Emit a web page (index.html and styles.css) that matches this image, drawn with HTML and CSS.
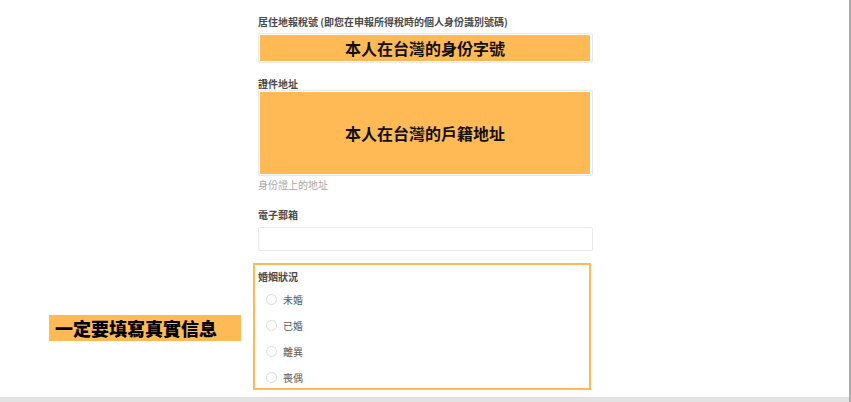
FILE: index.html
```html
<!DOCTYPE html>
<html lang="zh-Hant">
<head>
<meta charset="utf-8">
<title>表單</title>
<link rel="stylesheet" href="styles.css">
</head>
<body>
<div class="page">
  <div class="main">
    <form class="form">
      <div class="label label-first">居住地報稅號 (即您在申報所得稅時的個人身份識別號碼)</div>
      <div class="input input-id"><div class="fill">本人在台灣的身份字號</div></div>
      <div class="label label-addr">證件地址</div>
      <div class="input input-addr"><div class="fill">本人在台灣的戶籍地址</div></div>
      <div class="hint">身份證上的地址</div>
      <div class="label label-mail">電子郵箱</div>
      <div class="input input-mail"></div>
      <div class="group">
        <div class="group-label">婚姻狀況</div>
        <div class="radio"><span class="dot"></span><span class="opt">未婚</span></div>
        <div class="radio"><span class="dot"></span><span class="opt">已婚</span></div>
        <div class="radio"><span class="dot"></span><span class="opt">離異</span></div>
        <div class="radio"><span class="dot"></span><span class="opt">喪偶</span></div>
      </div>
    </form>
    <div class="callout">一定要填寫真實信息</div>
  </div>
  <div class="bottom"></div>
</div>
</body>
</html>
```
FILE: styles.css
```css
html, body {
  margin: 0;
  padding: 0;
  background: #ffffff;
}
body {
  font-family: "Noto Sans CJK TC", "Noto Sans", sans-serif;
  color: #444;
}
.page {
  width: 849px;
  height: 402px;
  border-right: 2px solid #ababab;
  display: flex;
  flex-direction: column;
  overflow: hidden;
}
.main {
  position: relative;
  height: 397px;
  flex: none;
  background: #fff;
}
.bottom {
  height: 5px;
  background: #e2e2e2;
}
.form {
  margin-left: 253px;
  width: 340px;
  display: flex;
  flex-direction: column;
}
.label {
  font-size: 10px;
  line-height: 12px;
  font-weight: 700;
  color: #4a4a4a;
  margin-left: 5px;
  white-space: nowrap;
}
.label-first { margin-top: 16px; }
.label-addr { margin-top: 15px; }
.label-mail { margin-top: 18px; }
.input {
  margin-left: 5px;
  width: 335px;
  box-sizing: border-box;
  border: 1px solid #e9e9e9;
  border-radius: 2px;
  padding: 1px;
  background: #fff;
  display: flex;
}
.input-id { margin-top: 5px; height: 30px; }
.input-addr { height: 86px; }
.input-mail { margin-top: 6px; height: 24px; }
.fill {
  flex: 1;
  margin-right: 1px;
  background: #ffb955;
  color: #111;
  font-size: 16px;
  font-weight: 700;
  display: flex;
  align-items: center;
  justify-content: center;
}
.hint {
  margin-top: 3px;
  margin-left: 5px;
  font-size: 10px;
  line-height: 12px;
  color: #a8a8a8;
}
.group {
  margin-top: 12px;
  width: 338px;
  height: 127px;
  box-sizing: border-box;
  border: 2px solid #ffb955;
  padding: 6px 0 0 3px;
  display: flex;
  flex-direction: column;
  gap: 6px;
}
.group-label {
  font-size: 10px;
  line-height: 12px;
  font-weight: 700;
  color: #4a4a4a;
}
.radio {
  height: 20px;
  display: flex;
  align-items: center;
  padding-left: 8px;
  gap: 6px;
}
.dot {
  width: 11px;
  height: 11px;
  box-sizing: border-box;
  border: 1px solid #dcdcdc;
  border-radius: 50%;
  background: #fff;
}
.opt {
  font-size: 10px;
  color: #5a5a5a;
}
.callout {
  position: absolute;
  left: 49px;
  top: 315px;
  width: 192px;
  height: 26px;
  box-sizing: border-box;
  padding-left: 6px;
  background: #ffb955;
  color: #000;
  font-size: 18px;
  font-weight: 900;
  line-height: 26px;
  white-space: nowrap;
}
```
